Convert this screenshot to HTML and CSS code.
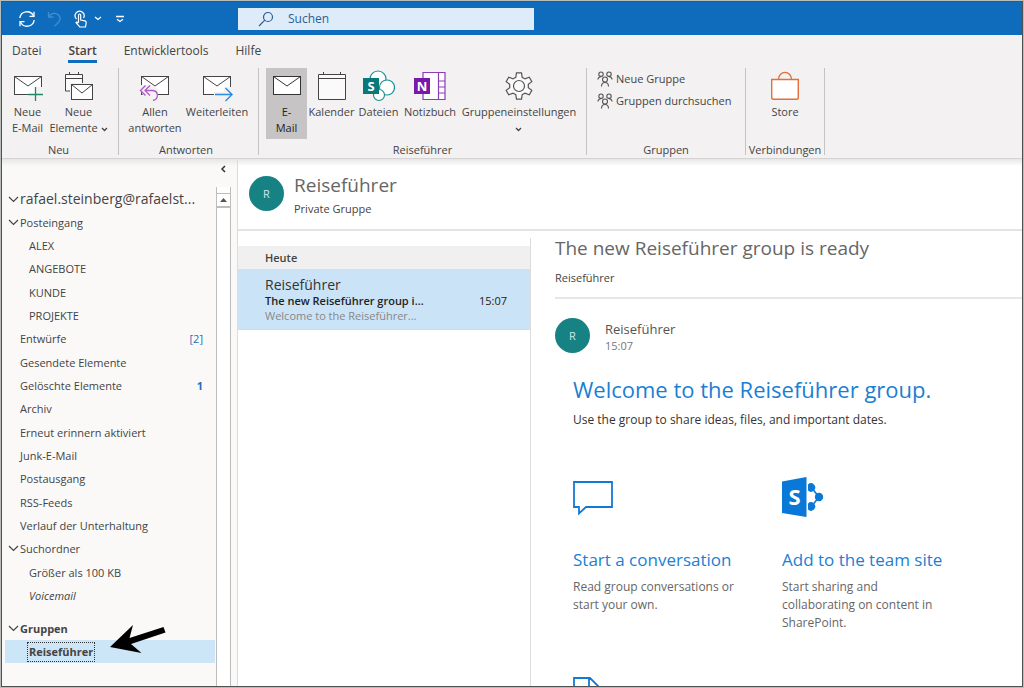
FILE: index.html
```html
<!DOCTYPE html>
<html lang="de">
<head>
<meta charset="utf-8">
<meta name="viewport" content="width=device-width, initial-scale=1">
<title>Reiseführer – Outlook</title>
<link rel="stylesheet" href="styles.css">
</head>
<body>
<div class="window">
  <header class="titlebar">
    <div class="quick">
      <button class="quick-btn" aria-label="Senden/Empfangen">
        <svg width="18" height="18" viewBox="0 0 18 18"><g fill="none" stroke="#fff" stroke-width="1.3"><path d="M1.8 8A7.2 7.2 0 0 1 15.500 6"/><path d="M16.200 10A7.200 7.200 0 0 1 2.500 12"/><path d="M16 1.800V6.300H11.500"/><path d="M2 16.200V11.700H6.500"/></g></svg>
      </button>
      <button class="quick-btn" aria-label="Rückgängig">
        <svg width="16" height="18" viewBox="0 0 16 18"><path d="M1.500 2V7H6.500M1.500 7C4 3 8 2.500 11 4.500C14.500 7.500 14 11 7.500 16" fill="none" stroke="#3d8dd3" stroke-width="1.300"/></svg>
      </button>
      <button class="quick-btn quick-touch" aria-label="Touch-/Mausmodus">
        <svg width="14" height="18" viewBox="0 0 14 18"><g fill="none" stroke="#fff" stroke-width="1.200"><path d="M2.500 9A4.500 4.500 0 1 1 9.500 8"/><path d="M4.500 12.500V5.500Q4.500 4 5.600 4T6.700 5.500V10L11 10.800Q12.500 11.200 12.200 12.600L11.500 17H5.800L2 12.700Q2.500 11.300 4.500 13"/></g></svg>
        <svg width="8" height="5" viewBox="0 0 8 5"><path d="M1 1L4 3.500L7 1" fill="none" stroke="#fff" stroke-width="1.300"/></svg>
      </button>
      <button class="quick-btn" aria-label="Symbolleiste anpassen">
        <svg width="8" height="8" viewBox="0 0 8 8"><path d="M0 1.500H8M1 4.200L4 6.500L7 4.200" fill="none" stroke="#fff" stroke-width="1.300"/></svg>
      </button>
    </div>
    <label class="search">
      <svg width="16" height="16" viewBox="0 0 16 16"><g fill="none" stroke="#2a5f97" stroke-width="1.200"><circle cx="10" cy="6" r="4.500"/><path d="M6.800 9.200L1 15"/></g></svg>
      <input type="text" placeholder="Suchen" aria-label="Suchen">
    </label>
  </header>

  <nav class="tabs">
    <button class="tab">Datei</button>
    <button class="tab tab-active">Start</button>
    <button class="tab">Entwicklertools</button>
    <button class="tab">Hilfe</button>
  </nav>

  <div class="ribbon">
    <section class="group group-new">
      <div class="group-items">
        <button class="tool">
          <svg width="32" height="32" viewBox="0 0 32 32"><rect x="2.500" y="6.500" width="27" height="18" fill="#fff" stroke="#444"/><path d="M2.500 6.500L16 16L29.500 6.500" fill="none" stroke="#444"/><path d="M23 17H31V30H17V24H23Z" fill="#f3f1f2"/><path d="M23.500 17V31M16.500 24.500H31" stroke="#1f8a61" stroke-width="1.300"/></svg>
          <span>Neue<br>E-Mail</span>
        </button>
        <button class="tool">
          <svg width="32" height="32" viewBox="0 0 32 32"><path d="M2.500 4.500H19.500V21H2.500ZM2.500 8.500H19.500M6.500 2V5M15.500 2V5" fill="#fafafa" stroke="#444"/><rect x="8.500" y="14.500" width="21" height="15" fill="#fff" stroke="#f3f1f2" stroke-width="3"/><rect x="8.500" y="14.500" width="21" height="15" fill="#fff" stroke="#444"/><path d="M8.500 14.500L19 23L29.500 14.500" fill="none" stroke="#444"/></svg>
          <span>Neue<br>Elemente <svg width="7" height="5" viewBox="0 0 7 5"><path d="M1 1L3.500 3.500L6 1" fill="none" stroke="#444" stroke-width="1.300"/></svg></span>
        </button>
      </div>
      <h2 class="group-name">Neu</h2>
    </section>

    <section class="group group-reply">
      <div class="group-items">
        <button class="tool">
          <svg width="32" height="32" viewBox="0 0 32 32"><rect x="2.500" y="6.500" width="27" height="18" fill="#fff" stroke="#444"/><path d="M2.500 6.500L16 16L29.500 6.500" fill="none" stroke="#444"/><path d="M0 15H13L19 19V31H6Z" fill="#f3f1f2"/><path d="M6.500 15.500L1.500 20.500L6.500 25.500M11 15.500L6 20.500L11 25.500M6 20.500H13C20 20.500 20 29 14 30.500" fill="none" stroke="#b05bc6" stroke-width="1.300"/></svg>
          <span>Allen<br>antworten</span>
        </button>
        <button class="tool">
          <svg width="32" height="32" viewBox="0 0 32 32"><rect x="2.500" y="6.500" width="27" height="18" fill="#fff" stroke="#444"/><path d="M2.500 6.500L16 16L29.500 6.500" fill="none" stroke="#444"/><path d="M13 22H23V17H31V30H13Z" fill="#f3f1f2"/><path d="M14 24.500H30.500M24.500 18L31 24.500L24.500 31" fill="none" stroke="#2b8bdc" stroke-width="1.400"/></svg>
          <span>Weiterleiten</span>
        </button>
      </div>
      <h2 class="group-name">Antworten</h2>
    </section>

    <section class="group group-guide">
      <div class="group-items">
        <button class="tool tool-on" aria-pressed="true">
          <svg width="32" height="32" viewBox="0 0 32 32"><rect x="2.500" y="6.500" width="27" height="18" fill="#fff" stroke="#333"/><path d="M2.500 6.500L16 16L29.500 6.500" fill="none" stroke="#333"/></svg>
          <span>E-<br>Mail</span>
        </button>
        <button class="tool">
          <svg width="32" height="32" viewBox="0 0 32 32"><path d="M2.500 4.500H29.500V29.500H2.500ZM2.500 8.500H29.500M7.500 2V5M24.500 2V5" fill="#fafafa" stroke="#444"/></svg>
          <span>Kalender</span>
        </button>
        <button class="tool tool-files">
          <svg width="32" height="32" viewBox="0 0 32 32"><g fill="#fff" stroke="#1d9093" stroke-width="1.200"><circle cx="15" cy="9" r="8"/><circle cx="24" cy="17.500" r="7.500"/><circle cx="16" cy="25" r="5.500"/></g><rect x="0" y="8" width="16" height="16" fill="#08797b"/><text x="8" y="20.500" class="glyph glyph-m">S</text></svg>
          <span>Dateien</span>
        </button>
        <button class="tool tool-notes">
          <svg width="32" height="32" viewBox="0 0 32 32"><path d="M9 2.500H31V29.500H9ZM24.500 2.500V29.500M24.500 11H31M24.500 17H31M24.500 23H31" fill="#fff" stroke="#8e3bb8" stroke-width="1.200"/><rect x="0" y="8" width="16" height="16" fill="#7719aa"/><text x="8" y="20.500" class="glyph glyph-m">N</text></svg>
          <span>Notizbuch</span>
        </button>
        <button class="tool tool-settings">
          <svg width="32" height="32" viewBox="0 0 32 32"><g fill="#fafafa" stroke="#555" stroke-width="1.200"><path d="M12.800 7.300L13.500 2.800H18.500L19.200 7.300L22 8.900L26.300 7.300L28.800 11.600L25.300 14.400V17.600L28.800 20.400L26.300 24.700L22 23.100L19.200 24.700L18.500 29.200H13.500L12.800 24.700L10 23.100L5.700 24.700L3.200 20.400L6.700 17.600V14.400L3.200 11.600L5.700 7.300L10 8.900Z"/><circle cx="16" cy="16" r="5.500"/></g></svg>
          <span>Gruppeneinstellungen<br><svg width="7" height="5" viewBox="0 0 7 5"><path d="M1 1L3.500 3.500L6 1" fill="none" stroke="#444" stroke-width="1.300"/></svg></span>
        </button>
      </div>
      <h2 class="group-name">Reiseführer</h2>
    </section>

    <section class="group group-groups">
      <div class="group-stack">
        <button class="row-tool">
          <svg width="16" height="16" viewBox="0 0 16 16"><g fill="none" stroke="#555" stroke-width="1.100"><circle cx="4" cy="3.200" r="2.200"/><circle cx="12" cy="3.200" r="2.200"/><circle cx="8" cy="8.500" r="2.500"/><path d="M.8 8.500Q1.500 5.500 4.500 5.500M15.200 8.500Q14.500 5.500 11.500 5.500M4.500 15.500Q4.500 11.500 8 11.500T11.500 15.500"/></g></svg>
          <span>Neue Gruppe</span>
        </button>
        <button class="row-tool">
          <svg width="16" height="16" viewBox="0 0 16 16"><g fill="none" stroke="#555" stroke-width="1.100"><circle cx="4" cy="3.200" r="2.200"/><circle cx="12" cy="3.200" r="2.200"/><circle cx="8" cy="8.500" r="2.500"/><path d="M.8 8.500Q1.500 5.500 4.500 5.500M15.200 8.500Q14.500 5.500 11.500 5.500M4.500 15.500Q4.500 11.500 8 11.500T11.500 15.500"/></g></svg>
          <span>Gruppen durchsuchen</span>
        </button>
      </div>
      <h2 class="group-name">Gruppen</h2>
    </section>

    <section class="group group-store">
      <div class="group-items">
        <button class="tool">
          <svg width="32" height="32" viewBox="0 0 32 32"><g stroke="#e2703a" stroke-width="1.400"><path d="M9.500 9.500C9.500 0 22.500 0 22.500 9.500" fill="none"/><path d="M2.700 9.500H29.300V27.500Q29.300 29.300 27.500 29.300H4.500Q2.700 29.300 2.700 27.500Z" fill="#fff"/></g></svg>
          <span>Store</span>
        </button>
      </div>
      <h2 class="group-name">Verbindungen</h2>
    </section>
  </div>

  <div class="body">
    <aside class="sidebar">
      <button class="collapse" aria-label="Ordnerbereich minimieren">
        <svg width="6" height="8" viewBox="0 0 6 8"><path d="M5 1L2 4L5 7" fill="none" stroke="#333" stroke-width="1.500"/></svg>
      </button>
      <div class="side-main">
        <nav class="folders">
          <button class="folder account"><svg class="chev" width="11" height="7" viewBox="0 0 11 7"><path d="M1 1L5.500 5.500L10 1" fill="none" stroke="#444" stroke-width="1.200"/></svg><span>rafael.steinberg@rafaelst...</span></button>
          <ul class="list">
            <li><button class="folder"><svg class="chev" width="11" height="7" viewBox="0 0 11 7"><path d="M1 1L5.500 5.500L10 1" fill="none" stroke="#444" stroke-width="1.200"/></svg><span>Posteingang</span></button></li>
            <li><button class="folder sub">ALEX</button></li>
            <li><button class="folder sub">ANGEBOTE</button></li>
            <li><button class="folder sub">KUNDE</button></li>
            <li><button class="folder sub">PROJEKTE</button></li>
            <li><button class="folder top"><span>Entwürfe</span><span class="count">[2]</span></button></li>
            <li><button class="folder top">Gesendete Elemente</button></li>
            <li><button class="folder top"><span>Gelöschte Elemente</span><b class="count">1</b></button></li>
            <li><button class="folder top">Archiv</button></li>
            <li><button class="folder top">Erneut erinnern aktiviert</button></li>
            <li><button class="folder top">Junk-E-Mail</button></li>
            <li><button class="folder top">Postausgang</button></li>
            <li><button class="folder top">RSS-Feeds</button></li>
            <li><button class="folder top">Verlauf der Unterhaltung</button></li>
            <li><button class="folder"><svg class="chev" width="11" height="7" viewBox="0 0 11 7"><path d="M1 1L5.500 5.500L10 1" fill="none" stroke="#444" stroke-width="1.200"/></svg><span>Suchordner</span></button></li>
            <li><button class="folder sub">Größer als 100 KB</button></li>
            <li><button class="folder sub"><i>Voicemail</i></button></li>
          </ul>
          <ul class="list list-groups">
            <li><button class="folder"><svg class="chev" width="11" height="7" viewBox="0 0 11 7"><path d="M1 1L5.500 5.500L10 1" fill="none" stroke="#444" stroke-width="1.200"/></svg><b>Gruppen</b></button></li>
            <li class="selected"><button class="folder sub"><b class="focus">Reiseführer</b></button>
              <svg class="pointer" width="58" height="30" viewBox="0 0 58 30"><path d="M1 23L24 1L20.500 14L54.500 3L56.500 8.500L22 20L32.500 29Z" fill="#000"/></svg>
            </li>
          </ul>
        </nav>
        <div class="scroll">
          <button class="scroll-up" aria-label="Nach oben"><svg width="7" height="4" viewBox="0 0 7 4"><path d="M0 4L3.500 0L7 4Z" fill="#555"/></svg></button>
        </div>
      </div>
    </aside>

    <main class="main">
      <header class="group-head">
        <span class="avatar">R</span>
        <div>
          <h1 class="big">Reiseführer</h1>
          <p class="privacy">Private Gruppe</p>
        </div>
      </header>
      <div class="panes">
        <section class="messages">
          <h2 class="day">Heute</h2>
          <button class="message">
            <span class="from">Reiseführer</span>
            <span class="line"><span class="subject">The new Reiseführer group i...</span><span>15:07</span></span>
            <span class="preview">Welcome to the Reiseführer...</span>
          </button>
        </section>
        <article class="reading">
          <h2 class="big">The new Reiseführer group is ready</h2>
          <p class="to">Reiseführer</p>
          <div class="sender">
            <span class="avatar">R</span>
            <div>
              <p class="sender-name">Reiseführer</p>
              <p class="sender-time">15:07</p>
            </div>
          </div>
          <div class="content">
            <h3 class="welcome">Welcome to the Reiseführer group.</h3>
            <p class="intro">Use the group to share ideas, files, and important dates.</p>
            <div class="tiles">
              <div class="tile">
                <svg width="42" height="42" viewBox="0 0 42 42"><path d="M1 5H39V30H13L6 36.500V30H1Z" fill="#fff" stroke="#1279d6" stroke-width="1.800"/></svg>
                <a class="tile-link" href="#">Start a conversation</a>
                <p>Read group conversations or start your own.</p>
              </div>
              <div class="tile">
                <svg width="42" height="42" viewBox="0 0 42 42"><path d="M0 4.500L24.500 0V40L0 36Z" fill="#0a78d6"/><g fill="#0a78d6"><path d="M26 7.500A4.200 4.200 0 1 1 26 13.500Z"/><path d="M26 26.500A4.200 4.200 0 1 1 26 32.500Z"/><circle cx="37" cy="20" r="4.200"/></g><path d="M29 10L37 20L29 30" fill="none" stroke="#0a78d6" stroke-width="1.600"/><text x="12.500" y="28" class="glyph glyph-l">S</text></svg>
                <a class="tile-link" href="#">Add to the team site</a>
                <p>Start sharing and collaborating on content in SharePoint.</p>
              </div>
              <div class="tile">
                <svg width="42" height="42" viewBox="0 0 42 42"><path d="M1 2H17L29 14V40H1ZM16 2V14H29" fill="#fff" stroke="#1279d6" stroke-width="1.800"/></svg>
              </div>
            </div>
          </div>
        </article>
      </div>
    </main>
  </div>
</div>
</body>
</html>
```
FILE: styles.css
```css
* { box-sizing: border-box; }

body {
  margin: 0;
  padding: 1px;
  height: 100vh;
  background: #b9bdb9;
  font: 12px/16px "Open Sans", "Noto Sans", sans-serif;
  color: #444;
}

button {
  margin: 0;
  padding: 0;
  border: 0;
  background: none;
  font: inherit;
  color: inherit;
}

h1, h2, h3, p, ul { margin: 0; padding: 0; font-weight: 400; }
ul { list-style: none; }
svg { flex: none; }

.window {
  display: flex;
  flex-direction: column;
  height: 100%;
  border: 1px solid #505050;
  background: #fff;
  overflow: hidden;
}

/* Title bar */
.titlebar {
  display: flex;
  align-items: center;
  flex: none;
  height: 33px;
  background: #0f6cbd;
}
.quick {
  display: flex;
  align-items: center;
  width: 236px;
  padding-left: 16px;
  gap: 11px;
}
.quick-btn { display: flex; align-items: center; gap: 6px; }
.quick-touch { margin-right: 3px; }
.search {
  display: flex;
  align-items: center;
  flex: 0 1 296px;
  height: 22px;
  padding-left: 20px;
  gap: 14px;
  background: #deecf9;
}
.search input {
  width: 100%;
  border: 0;
  padding: 0;
  background: none;
  font: inherit;
  color: #2a5f97;
}
.search input::placeholder { color: #2a5f97; opacity: 1; }

/* Ribbon */
.tabs {
  display: flex;
  flex: none;
  gap: 27px;
  height: 32px;
  padding: 7px 10px 0;
  background: #f3f1f2;
}
.tab { height: 21px; border-bottom: 3px solid transparent; }
.tab-active { border-color: #0f6cbd; font-weight: 600; }

.ribbon {
  display: flex;
  flex: none;
  padding: 1px 0 3px;
  border-bottom: 1px solid #d5d3d4;
  background: #f3f1f2;
  font-size: 11px;
}
.group {
  display: flex;
  flex-direction: column;
  justify-content: space-between;
  height: 87px;
  border-right: 1px solid #c4c2c3;
}
.group-items { display: flex; }
.group-name { font-size: 11px; line-height: 11px; text-align: center; white-space: nowrap; }
.group-new { width: 117px; padding-right: 3px; }
.group-reply { width: 140px; padding: 0 10px 0 5px; }
.group-guide { width: 328px; padding: 0 7px; }
.group-groups { width: 159px; padding: 0 10px; }
.group-store { width: 79px; }
.group-store .group-items { justify-content: center; }

.tool {
  display: flex;
  flex-direction: column;
  align-items: center;
  flex: none;
  height: 71px;
  padding: 2px 0;
  gap: 2px;
  white-space: nowrap;
}
.tool span svg { vertical-align: middle; }
.group-new .tool { width: 51px; }
.group-reply .tool { width: 62px; }
.group-guide .tool { width: 49px; }
.group-guide .tool-files { width: 45px; }
.group-guide .tool-notes { width: 58px; }
.group-guide .tool-settings { width: 120px; }
.group-guide .tool-on { width: 41px; background: #c6c4c4; color: #222; }
.group-stack { display: flex; flex-direction: column; gap: 6px; padding-top: 3px; }
.row-tool { display: flex; align-items: center; gap: 3px; white-space: nowrap; }

.glyph { fill: #fff; font-family: "Open Sans", sans-serif; font-weight: 700; text-anchor: middle; }
.glyph-m { font-size: 13px; }
.glyph-l { font-size: 22px; }

/* Body */
.body {
  display: grid;
  grid-template-columns: 236px minmax(0, 1fr);
  flex: 1;
  min-height: 0;
  background: linear-gradient(#e6e6e6, transparent 7px);
}
.sidebar {
  display: flex;
  flex-direction: column;
  min-height: 0;
  border-right: 1px solid #dcdcdc;
  background: linear-gradient(#e6e6e6, #faf9f8 7px);
}
.collapse { display: flex; justify-content: flex-end; flex: none; padding: 6px 11px 0; height: 28px; }
.side-main { display: flex; flex: 1; min-height: 0; padding-right: 6px; }
.folders { flex: 1; padding: 0 1px 0 3px; font-size: 11px; }
.folder {
  display: flex;
  align-items: center;
  width: 100%;
  height: 23px;
  padding: 0 12px 0 3px;
  white-space: nowrap;
}
.folder.account { height: 24px; font-size: 14px; }
.chev { margin-right: 1px; }
.folder.top { padding-left: 15px; }
.folder.sub { padding-left: 24px; }
.list li:nth-child(3n) { padding-bottom: 1px; }
.count { margin-left: auto; color: #2b6cb5; }
.list-groups { padding-top: 10px; }
.selected { position: relative; background: #cde6f7; }
.focus { outline: 1px dotted #333; outline-offset: 1px; }
.pointer { position: absolute; left: 104px; top: -16px; }
.scroll { flex: none; width: 15px; border: 1px solid #bdbdbd; border-width: 0 1px; background: #fff; }
.scroll-up { display: flex; align-items: center; justify-content: center; width: 100%; height: 15px; margin-top: 6px; border: 1px solid #bdbdbd; border-width: 1px 0 2px; }

.main { display: flex; flex-direction: column; min-height: 0; }
.group-head {
  display: flex;
  flex: none;
  height: 72px;
  padding: 13px 12px 0 11px;
  gap: 10px;
  border-bottom: 2px solid #e3e3e3;
}
.avatar {
  display: flex;
  align-items: center;
  justify-content: center;
  flex: none;
  width: 35px;
  height: 35px;
  margin-top: 4px;
  border-radius: 50%;
  background: #168284;
  color: #cfe8e8;
  font-size: 11px;
}
.big { font-size: 19px; line-height: 26px; color: #666; white-space: nowrap; }
.privacy { margin-top: 3px; font-size: 11px; }

.panes { display: grid; grid-template-columns: 293px minmax(0, 1fr); flex: 1; min-height: 0; }
.messages { margin-top: 7px; padding-top: 8px; border-right: 1px solid #dcdcdc; }
.day { height: 23px; padding-left: 27px; background: #f0f0f0; font-size: 11px; line-height: 23px; font-weight: 600; }
.message {
  display: block;
  width: 100%;
  height: 61px;
  padding: 7px 23px 7px 27px;
  border-bottom: 1px solid #d3dde5;
  background: #cbe3f7;
  font-size: 11px;
  line-height: 15px;
  text-align: left;
}
.message > span { display: flex; justify-content: space-between; }
.message > .from { font-size: 14px; line-height: 17px; color: #333; }
.line { color: #222; }
.subject { font-weight: 600; }
.message > .preview { color: #888; }

.reading { min-height: 0; padding: 4px 0 0 24px; overflow: hidden; }
.to { padding: 9px 0 11px; border-bottom: 2px solid #e6e6e6; font-size: 11px; }
.sender { display: flex; gap: 15px; padding: 15px 0 0; }
.sender div { padding-top: 6px; }
.sender-name { font-size: 13px; line-height: 18px; color: #555; }
.sender-time { font-size: 11px; color: #777; }
.content { padding: 17px 18px 0; }
.welcome { font-size: 22px; line-height: 36px; color: #1a7fd4; white-space: nowrap; }
.intro { padding: 5px 0 49px; color: #333; }
.tiles { display: grid; grid-template-columns: 165px 165px; gap: 44px; font-size: 12px; line-height: 18px; color: #666; }
.tile { display: flex; flex-direction: column; align-items: flex-start; }
.tile-link { margin: 28px 0 6px; font-size: 17px; line-height: 25px; color: #1a7fd4; text-decoration: none; white-space: nowrap; }
```
